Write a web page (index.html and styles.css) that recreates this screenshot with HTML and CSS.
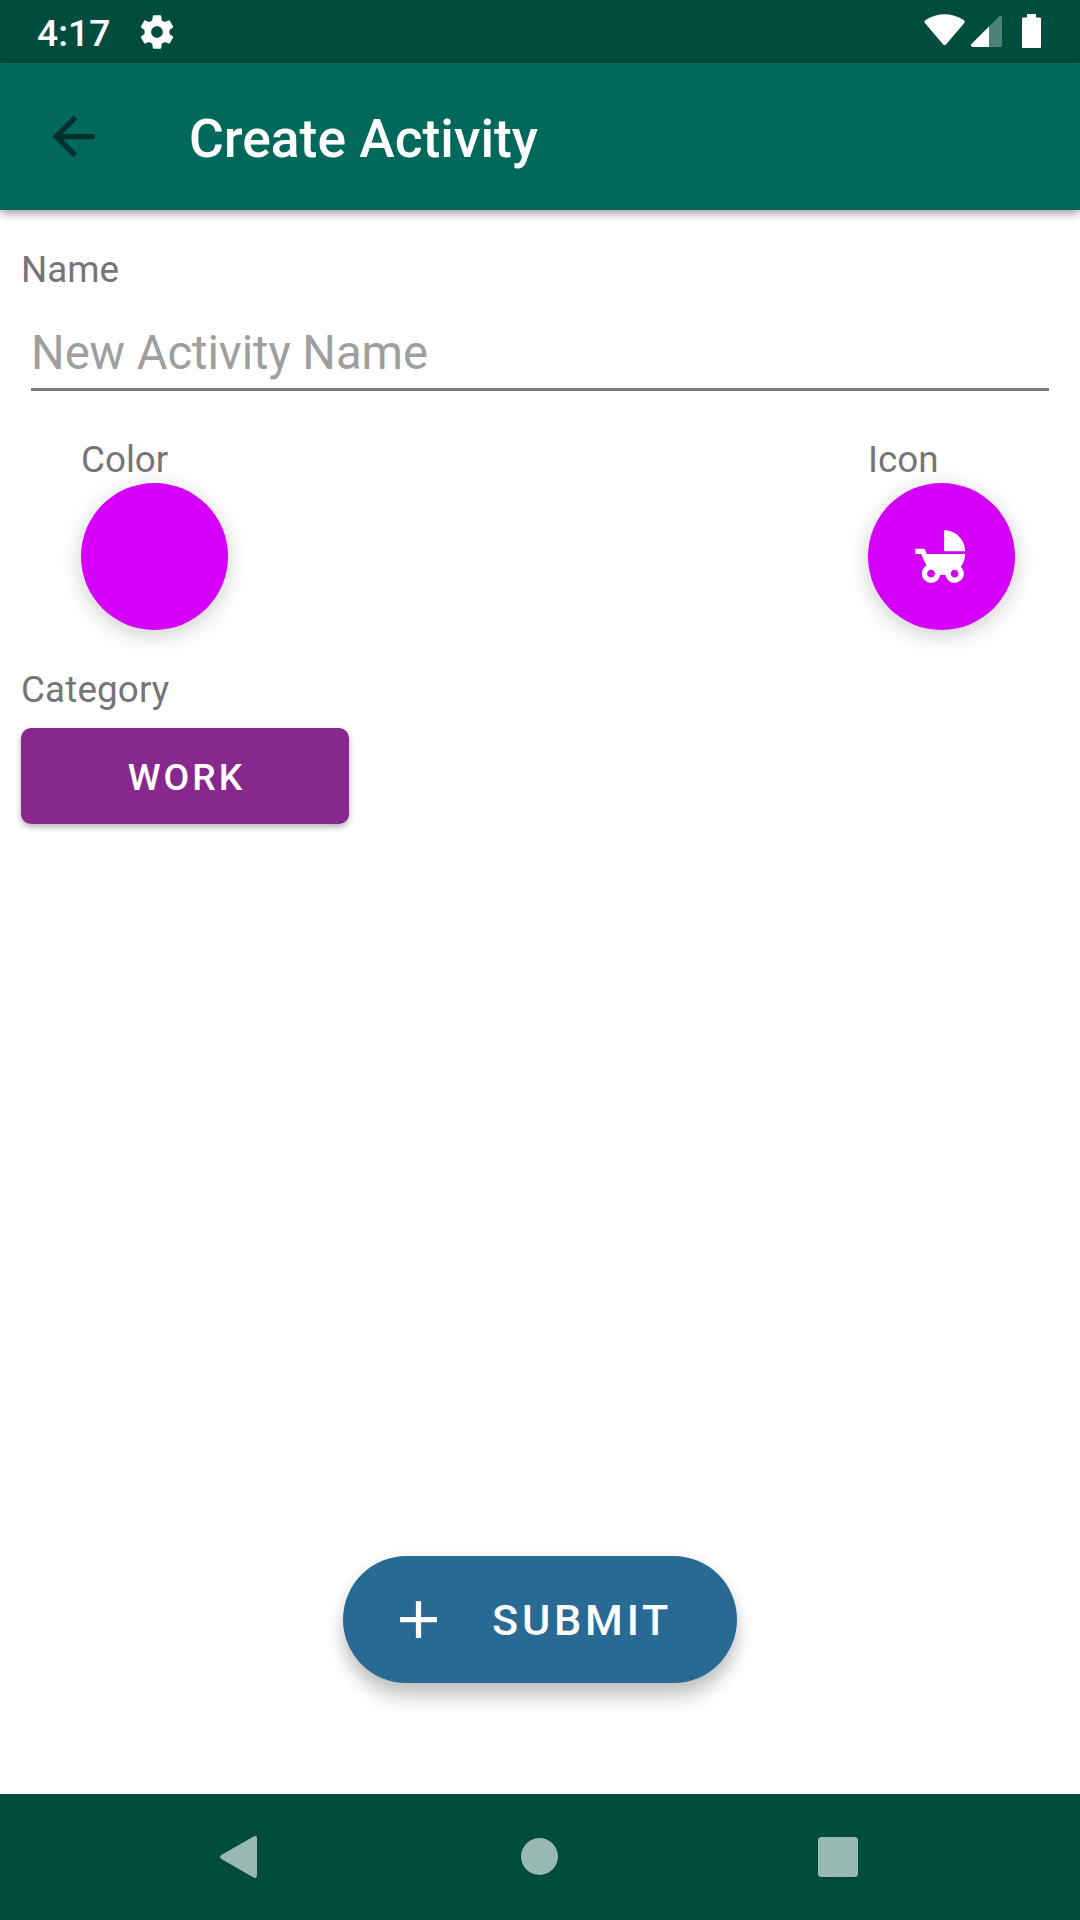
FILE: index.html
```html
<!DOCTYPE html>
<html lang="en">
<head>
<meta charset="utf-8">
<title>Create Activity</title>
<link rel="stylesheet" href="styles.css">
</head>
<body>
<div class="screen">
  <div class="status">
    <span class="clock">4:17</span>
    <svg class="gear" viewBox="0 0 24 24"><path d="M19.43 12.98c.04-.32.07-.64.07-.98s-.03-.66-.07-.98l2.11-1.65c.19-.15.24-.42.12-.64l-2-3.46c-.12-.22-.39-.3-.61-.22l-2.49 1c-.52-.4-1.08-.73-1.69-.98l-.38-2.65C14.46 2.18 14.25 2 14 2h-4c-.25 0-.46.18-.49.42l-.38 2.65c-.61.25-1.17.59-1.69.98l-2.49-1c-.23-.09-.49 0-.61.22l-2 3.46c-.13.22-.07.49.12.64l2.11 1.65c-.04.32-.07.65-.07.98s.03.66.07.98l-2.11 1.65c-.19.15-.24.42-.12.64l2 3.46c.12.22.39.3.61.22l2.49-1c.52.4 1.08.73 1.69.98l.38 2.65c.03.24.24.42.49.42h4c.25 0 .46-.18.49-.42l.38-2.65c.61-.25 1.17-.59 1.69-.98l2.49 1c.23.09.49 0 .61-.22l2-3.46c.12-.22.07-.49-.12-.64l-2.11-1.65zM12 15.5c-1.93 0-3.5-1.57-3.5-3.5s1.57-3.5 3.5-3.5 3.5 1.57 3.5 3.5-1.57 3.5-3.5 3.5z"/></svg>
    <svg class="signals" viewBox="0 0 120 63">
      <path d="M5.2 20.2Q24.6 8.4 44 20.2Q45.4 21.4 44.3 23L26 44.6Q24.6 46 23.2 44.6L4.900 23Q3.800 21.400 5.200 20.200Z"/>
      <path d="M69 26.500V47H52Q50.300 45.600 51.400 44Z"/>
      <path d="M69 26.500L79.500 16Q81.500 15 82 17V46Q82 47 81 47H69Z" opacity=".3"/>
      <path d="M107 14h9v3.600h4q1 0 1 1V47q0 1-1 1h-17q-1 0-1-1V18.600q0-1 1-1h4z"/>
    </svg>
  </div>
  <header class="toolbar">
    <svg class="back" viewBox="0 0 24 24"><path d="M20 11H7.830l5.590-5.590L12 4l-8 8 8 8 1.410-1.410L7.830 13H20v-2z"/></svg>
    <h1 class="title">Create Activity</h1>
  </header>
  <main class="form">
    <label class="label" for="name">Name</label>
    <input class="field" id="name" type="text" placeholder="New Activity Name">
    <div class="pickers">
      <div class="picker">
        <span class="label">Color</span>
        <button class="swatch" aria-label="Color"></button>
      </div>
      <div class="picker">
        <span class="label">Icon</span>
        <button class="swatch" aria-label="Icon"><svg class="icon" viewBox="0 0 24 24"><path d="M13 2v8h8c0-4.420-3.580-8-8-8zm6.320 13.890C20.370 14.540 21 12.840 21 11H6.440l-.95-2H2v2h2.220s1.890 4.070 2.120 4.420c-1.100.59-1.840 1.750-1.840 3.080C4.500 20.430 6.070 22 8 22c1.760 0 3.220-1.300 3.460-3h2.080c.24 1.700 1.700 3 3.460 3 1.930 0 3.500-1.570 3.500-3.500 0-1.040-.46-1.970-1.180-2.610zM8 20c-.83 0-1.500-.67-1.500-1.500S7.170 17 8 17s1.500.67 1.500 1.500S8.830 20 8 20zm9 0c-.83 0-1.500-.67-1.500-1.500S16.170 17 17 17s1.500.67 1.500 1.500S17.830 20 17 20z"/></svg></button>
      </div>
    </div>
    <span class="label category-label">Category</span>
    <button class="category">WORK</button>
    <button class="submit"><svg class="icon" viewBox="0 0 24 24"><path d="M19 13h-6v6h-2v-6H5v-2h6V5h2v6h6v2z"/></svg><span class="submit-text">SUBMIT</span></button>
  </main>
  <nav class="navbar">
    <svg viewBox="0 0 60 60"><path d="M41.500 9.600Q45 7.800 45 11.500V48.500Q45 52.200 41.500 50.400L9.300 32Q6.700 30 9.300 28Z"/></svg>
    <svg viewBox="0 0 60 60"><circle cx="29.500" cy="29.500" r="18.500"/></svg>
    <svg viewBox="0 0 60 60"><rect x="10" y="10" width="40" height="40" rx="3.500"/></svg>
  </nav>
</div>
</body>
</html>
```
FILE: styles.css
```css
* { box-sizing: border-box; margin: 0; }
body { background: #fff; font-family: Roboto, "Liberation Sans", sans-serif; }
button { border: 0; padding: 0; font: inherit; color: #fff; }
svg { display: block; fill: currentColor; flex: none; overflow: visible; }
.screen { width: 1080px; height: 1920px; display: flex; flex-direction: column; overflow: hidden; }

.status { height: 63px; display: flex; align-items: center; background: #004d40; color: #fff; padding-left: 37px; }
.clock { font-size: 37.3px; font-weight: 500; line-height: 43px; width: 100px; padding-top: 4px; }
.gear { width: 40px; height: 40px; }
.signals { width: 120px; height: 63px; margin-left: auto; margin-right: 40px; }

.toolbar { position: relative; height: 147px; display: flex; align-items: center; background: #00695c; box-shadow: 0 3px 9px rgba(0, 0, 0, .4); padding-left: 42px; }
.back { width: 63px; height: 63px; color: #00302b; }
.title { font-size: 53.4px; font-weight: 500; line-height: 62px; color: #fff; margin-left: 84px; padding-top: 5px; }

.form { flex: 1; display: flex; flex-direction: column; align-items: flex-start; padding: 35px 21px 111px; }
.label { font-size: 36.75px; line-height: 49px; color: #757575; }
.category-label { letter-spacing: .15px; }
.field { width: 1018px; height: 70px; margin: 27px 0 0 10px; padding: 0 0 4px; border: 0; border-bottom: 3px solid #7b7b7b; background: none; font: 47.25px/63px Roboto, "Liberation Sans", sans-serif; letter-spacing: -.08px; outline: 0; }
.field::placeholder { color: #9e9e9e; opacity: 1; }
.pickers { align-self: stretch; display: flex; justify-content: space-between; padding: 45px 44px 35px 60px; }
.picker { display: flex; flex-direction: column; }
.picker .label { height: 47px; line-height: 48px; }
.swatch { width: 147px; height: 147px; border-radius: 50%; background: #d500f9; display: grid; place-items: center; box-shadow: 0 5px 22px rgba(0, 0, 0, .2); }
.icon { width: 63px; height: 63px; }
.category { width: 328px; height: 96px; margin-top: 14px; padding: 2px 0 0 3px; border-radius: 10px; background: #87288f; font-size: 37.3px; font-weight: 500; letter-spacing: 3px; box-shadow: 0 3px 6px rgba(0, 0, 0, .3); }
.submit { width: 394px; height: 127px; margin-top: auto; align-self: center; border-radius: 64px; background: #296a94; display: flex; align-items: center; gap: 42px; padding-left: 44px; font-size: 43.2px; font-weight: 500; letter-spacing: 3.8px; box-shadow: 0 15px 18px rgba(0, 0, 0, .2), 0 2px 14px rgba(0, 0, 0, .08); }
.submit-text { padding-top: 2px; }

.navbar { height: 126px; display: flex; align-items: center; justify-content: space-between; background: #004d40; color: #99b8b3; padding: 0 212px; }
.navbar svg { width: 60px; height: 60px; filter: drop-shadow(0 2px 1px rgba(0, 0, 0, .12)); }
```
